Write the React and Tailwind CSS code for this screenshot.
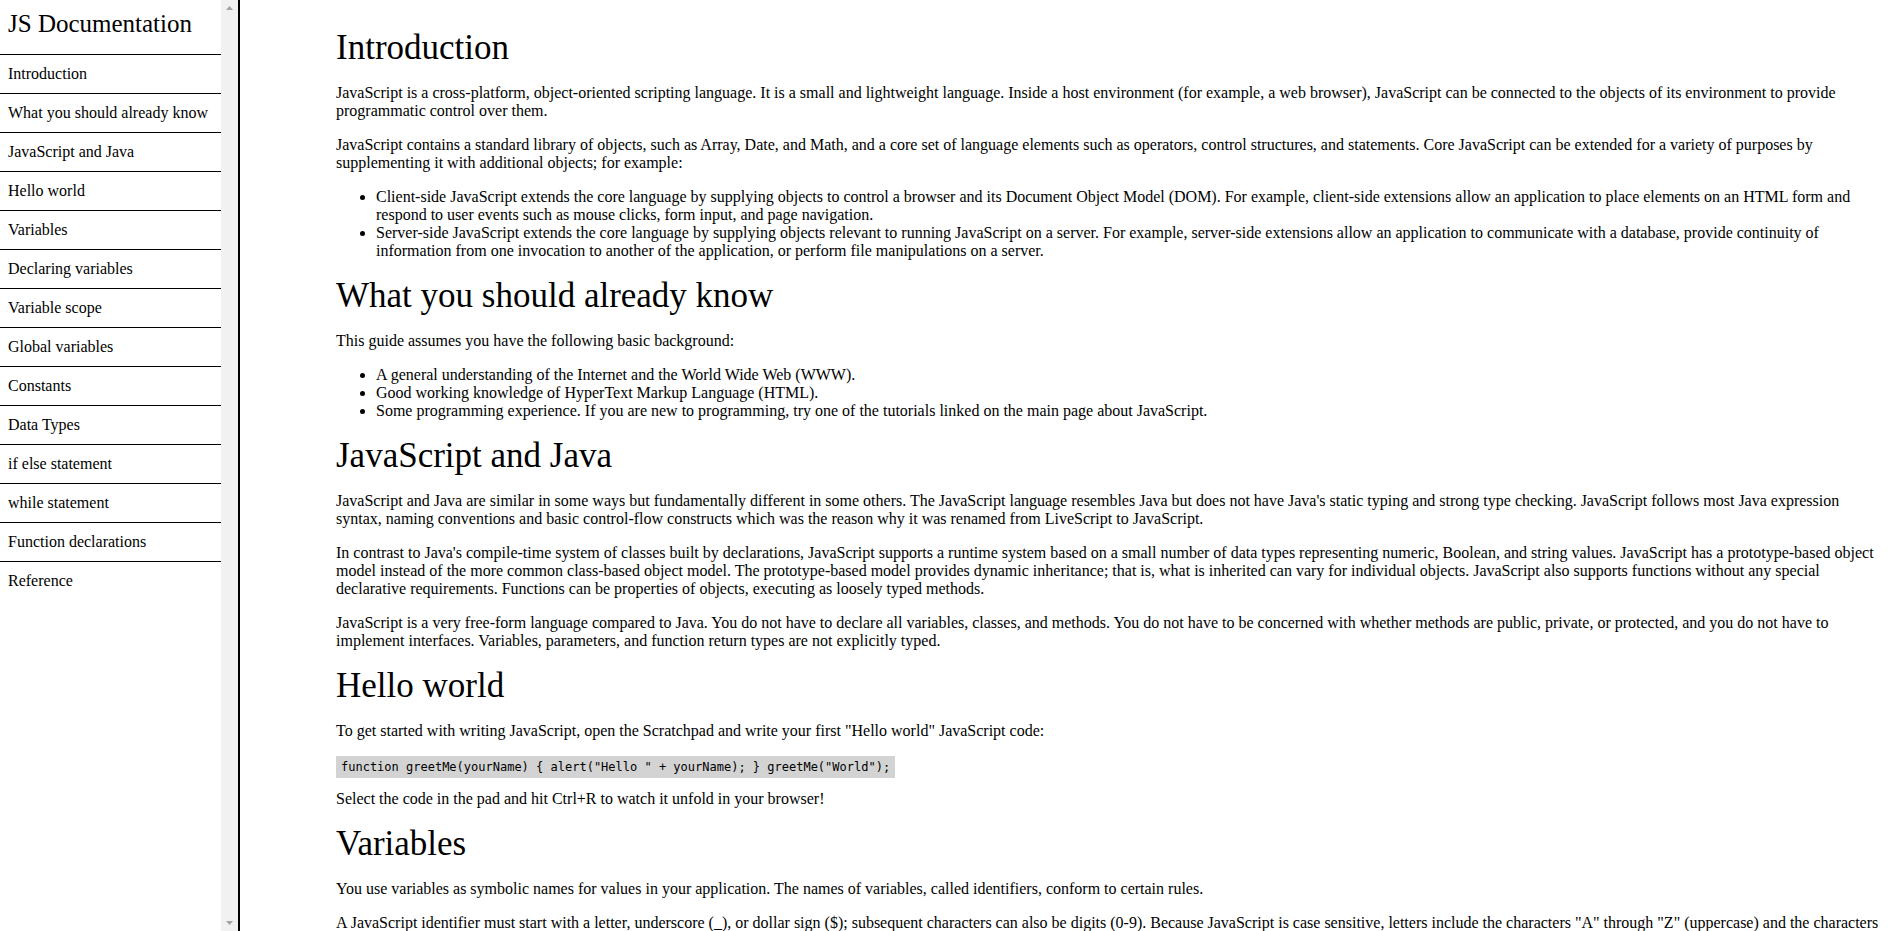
import React from "react";

const navItems = [
  "Introduction",
  "What you should already know",
  "JavaScript and Java",
  "Hello world",
  "Variables",
  "Declaring variables",
  "Variable scope",
  "Global variables",
  "Constants",
  "Data Types",
  "if else statement",
  "while statement",
  "Function declarations",
  "Reference",
];

function Heading({ children }) {
  return <header className="my-4 text-[35px] leading-[normal]">{children}</header>;
}

function Para({ children, className = "my-4" }) {
  return <p className={className}>{children}</p>;
}

function List({ items }) {
  return (
    <ul className="my-4 list-disc pl-10">
      {items.map((item, i) => (
        <li key={i}>{item}</li>
      ))}
    </ul>
  );
}

function ScrollTrack() {
  return (
    <div className="w-[17px] shrink-0 bg-[#f1f1f1] flex flex-col justify-between items-center py-[6px]">
      <svg width="7" height="4" viewBox="0 0 7 4">
        <polygon points="3.5,0 7,4 0,4" fill="#a3a3a3" />
      </svg>
      <svg width="7" height="4" viewBox="0 0 7 4">
        <polygon points="0,0 7,0 3.5,4" fill="#a3a3a3" />
      </svg>
    </div>
  );
}

export default function App() {
  return (
    <div className="flex h-screen overflow-hidden bg-white text-black font-['Liberation_Serif',serif] text-[16px] leading-[normal]">
      {/* Sidebar */}
      <nav id="navbar" className="flex w-[240px] shrink-0 border-r-2 border-black">
        <div className="w-[221px] shrink-0">
          <header className="pl-2 pt-[10px] pb-[16px] text-[25px] leading-[normal]">
            JS Documentation
          </header>
          <ul>
            {navItems.map((item) => (
              <li key={item} className="border-t border-black px-2 py-[10px] leading-[18px]">
                {item}
              </li>
            ))}
          </ul>
        </div>
        <ScrollTrack />
      </nav>

      {/* Main doc */}
      <main id="main-doc" className="w-[1646px] shrink-0 pl-[96px] pt-[12px]">
        <section>
          <Heading>Introduction</Heading>
          <Para>
            JavaScript is a cross-platform, object-oriented scripting language. It is a small and lightweight
            language. Inside a host environment (for example, a web browser), JavaScript can be connected to the
            objects of its environment to provide programmatic control over them.
          </Para>
          <Para>
            JavaScript contains a standard library of objects, such as Array, Date, and Math, and a core set of
            language elements such as operators, control structures, and statements. Core JavaScript can be
            extended for a variety of purposes by supplementing it with additional objects; for example:
          </Para>
          <List
            items={[
              "Client-side JavaScript extends the core language by supplying objects to control a browser and its Document Object Model (DOM). For example, client-side extensions allow an application to place elements on an HTML form and respond to user events such as mouse clicks, form input, and page navigation.",
              "Server-side JavaScript extends the core language by supplying objects relevant to running JavaScript on a server. For example, server-side extensions allow an application to communicate with a database, provide continuity of information from one invocation to another of the application, or perform file manipulations on a server.",
            ]}
          />
        </section>

        <section>
          <Heading>What you should already know</Heading>
          <Para>This guide assumes you have the following basic background:</Para>
          <List
            items={[
              "A general understanding of the Internet and the World Wide Web (WWW).",
              "Good working knowledge of HyperText Markup Language (HTML).",
              "Some programming experience. If you are new to programming, try one of the tutorials linked on the main page about JavaScript.",
            ]}
          />
        </section>

        <section>
          <Heading>JavaScript and Java</Heading>
          <Para>
            JavaScript and Java are similar in some ways but fundamentally different in some others. The
            JavaScript language resembles Java but does not have Java's static typing and strong type checking.
            JavaScript follows most Java expression syntax, naming conventions and basic control-flow constructs
            which was the reason why it was renamed from LiveScript to JavaScript.
          </Para>
          <Para>
            In contrast to Java's compile-time system of classes built by declarations, JavaScript supports a
            runtime system based on a small number of data types representing numeric, Boolean, and string values.
            JavaScript has a prototype-based object model instead of the more common class-based object model. The
            prototype-based model provides dynamic inheritance; that is, what is inherited can vary for individual
            objects. JavaScript also supports functions without any special declarative requirements. Functions can
            be properties of objects, executing as loosely typed methods.
          </Para>
          <Para>
            JavaScript is a very free-form language compared to Java. You do not have to declare all variables,
            classes, and methods. You do not have to be concerned with whether methods are public, private, or
            protected, and you do not have to implement interfaces. Variables, parameters, and function return
            types are not explicitly typed.
          </Para>
        </section>

        <section>
          <Heading>Hello world</Heading>
          <Para>
            To get started with writing JavaScript, open the Scratchpad and write your first "Hello world"
            JavaScript code:
          </Para>
          <div className="mt-4 mb-3">
            <code className="inline-block bg-[#d3d3d3] px-[5px] py-[4px] font-['DejaVu_Sans_Mono',monospace] text-[12px] leading-[14px]">
              function greetMe(yourName) {"{"} alert("Hello " + yourName); {"}"} greetMe("World");
            </code>
          </div>
          <Para className="mt-3 mb-4">Select the code in the pad and hit Ctrl+R to watch it unfold in your browser!</Para>
        </section>

        <section>
          <Heading>Variables</Heading>
          <Para>
            You use variables as symbolic names for values in your application. The names of variables, called
            identifiers, conform to certain rules.
          </Para>
          <Para>
            A JavaScript identifier must start with a letter, underscore (_), or dollar sign ($); subsequent
            characters can also be digits (0-9). Because JavaScript is case sensitive, letters include the
            characters "A" through "Z" (uppercase) and the characters "a" through "z" (lowercase).
          </Para>
        </section>
      </main>
    </div>
  );
}
